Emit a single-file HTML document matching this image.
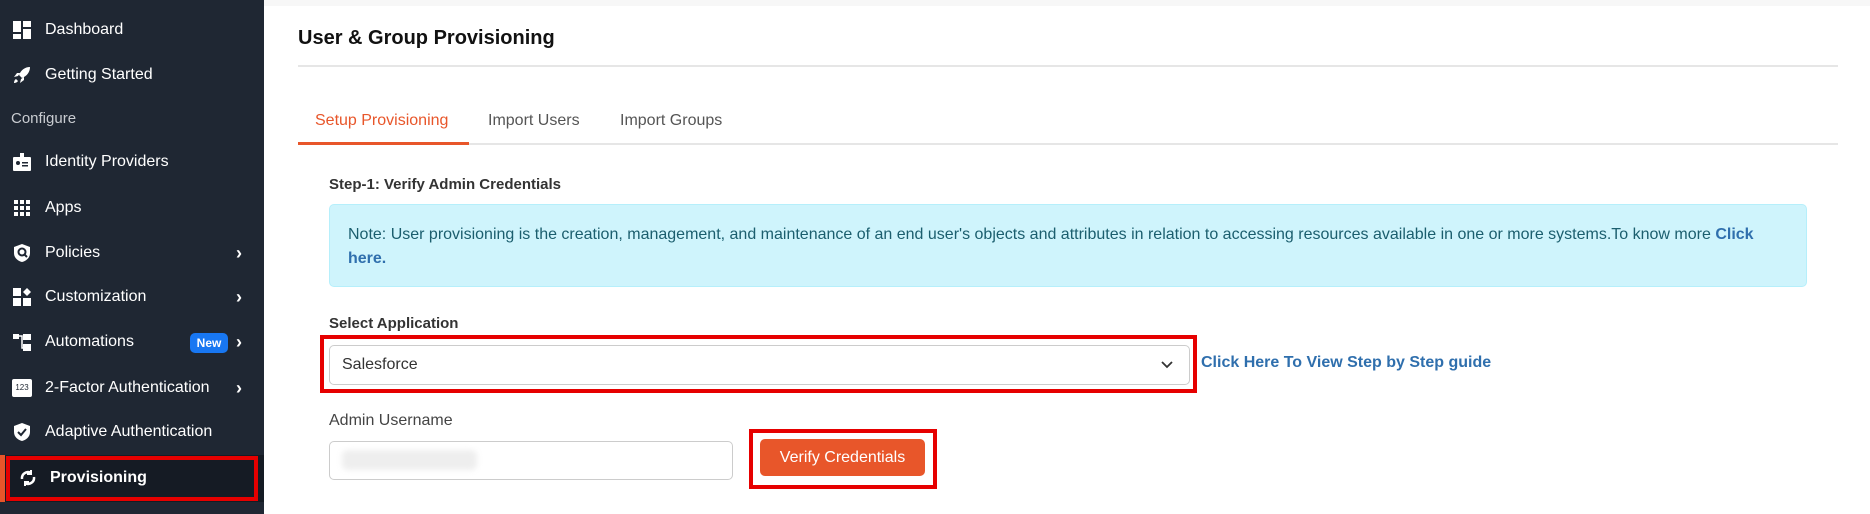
<!DOCTYPE html>
<html><head><meta charset="utf-8"><style>
*{margin:0;padding:0;box-sizing:border-box}
body{width:1870px;height:514px;overflow:hidden;background:#fff;font-family:"Liberation Sans",sans-serif;position:relative}
.sb{position:absolute;left:0;top:0;width:264px;height:514px;background:#1f2733}
.it{position:absolute;left:45px;color:#fff;font-size:16px;line-height:20px}
.ic{position:absolute;left:12px;width:20px;height:20px}
.chev{position:absolute;left:236px;color:#fff;font-size:18px;font-weight:bold;line-height:20px}
.a{position:absolute}
</style></head><body>
<div class="sb">
 <svg class="ic" style="top:20px" viewBox="0 0 20 20" fill="#fff"><rect x="1" y="1" width="8" height="11"/><rect x="11" y="1" width="8" height="6"/><rect x="11" y="9" width="8" height="10"/><rect x="1" y="14" width="8" height="5"/></svg>
 <div class="it" style="top:20px">Dashboard</div>
 <svg class="ic" style="top:65px" viewBox="0 0 20 20" fill="#fff"><path d="M18 2c-5 0-9 3-11 8l3 3c5-2 8-6 8-11zM6 11l-4 1 3-4h3zM9 14l-1 4 4-3v-3zM4 14c-2 1-2 4-2 4s3 0 4-2z"/></svg>
 <div class="it" style="top:65px">Getting Started</div>
 <div class="it" style="top:109px;left:11px;color:#c9ccd1;font-size:15px">Configure</div>
 <svg class="ic" style="top:152px" viewBox="0 0 20 20" fill="#fff"><rect x="1" y="5" width="18" height="14" rx="1"/><rect x="8" y="1" width="4" height="6" fill="#fff"/><circle cx="6" cy="11" r="2" fill="#1f2733"/><rect x="10" y="10" width="6" height="1.5" fill="#1f2733"/><rect x="10" y="13" width="6" height="1.5" fill="#1f2733"/></svg>
 <div class="it" style="top:152px">Identity Providers</div>
 <svg class="ic" style="top:198px" viewBox="0 0 20 20" fill="#fff"><rect x="2" y="2" width="4" height="4"/><rect x="8" y="2" width="4" height="4"/><rect x="14" y="2" width="4" height="4"/><rect x="2" y="8" width="4" height="4"/><rect x="8" y="8" width="4" height="4"/><rect x="14" y="8" width="4" height="4"/><rect x="2" y="14" width="4" height="4"/><rect x="8" y="14" width="4" height="4"/><rect x="14" y="14" width="4" height="4"/></svg>
 <div class="it" style="top:198px">Apps</div>
 <svg class="ic" style="top:243px" viewBox="0 0 20 20"><path d="M10 1l8 3v6c0 5-4 8-8 9-4-1-8-4-8-9V4z" fill="#fff"/><circle cx="10" cy="9" r="3.5" fill="none" stroke="#1f2733" stroke-width="2"/><path d="M12 11l3 3" stroke="#1f2733" stroke-width="2"/></svg>
 <div class="it" style="top:243px">Policies</div><div class="chev" style="top:243px">›</div>
 <svg class="ic" style="top:287px" viewBox="0 0 20 20" fill="#fff"><rect x="1" y="1" width="8" height="8"/><rect x="1" y="11" width="8" height="8"/><rect x="11" y="11" width="8" height="8"/><path d="M15 1l4 4-4 4-4-4z"/></svg>
 <div class="it" style="top:287px">Customization</div><div class="chev" style="top:287px">›</div>
 <svg class="ic" style="top:332px" viewBox="0 0 20 20" fill="#fff"><rect x="1" y="2" width="6" height="5"/><rect x="11" y="2" width="8" height="6"/><rect x="11" y="12" width="8" height="7"/><path d="M7 4h3v12h2" stroke="#fff" stroke-width="1.5" fill="none"/></svg>
 <div class="it" style="top:332px">Automations</div>
 <div class="a" style="left:190px;top:333px;width:38px;height:20px;background:#1877f2;border-radius:5px;color:#fff;font-size:12px;font-weight:bold;text-align:center;line-height:20px">New</div>
 <div class="chev" style="top:332px">›</div>
 <div class="ic" style="background:#fff;border-radius:2px;color:#1f2733;font-size:8px;text-align:center;height:18px;top:379px;line-height:18px">123</div>
 <div class="it" style="top:378px">2-Factor Authentication</div><div class="chev" style="top:378px">›</div>
 <svg class="ic" style="top:422px" viewBox="0 0 20 20"><path d="M10 1l8 3v6c0 5-4 8-8 9-4-1-8-4-8-9V4z" fill="#fff"/><path d="M6 10l3 3 5-6" stroke="#1f2733" stroke-width="2" fill="none"/></svg>
 <div class="it" style="top:422px">Adaptive Authentication</div>
 <div class="a" style="left:0;top:455px;width:264px;height:47px;background:#151b24"></div>
 <div class="a" style="left:0;top:455px;width:5px;height:47px;background:#e8562a"></div>
 <div class="a" style="left:6px;top:456px;width:252px;height:45px;border:4px solid #e60000"></div>
 <svg class="ic" style="top:468px;left:18px" viewBox="0 0 20 20" fill="none" stroke="#fff" stroke-width="2.5"><path d="M4 11a6 6 0 0 1 9-6M16 9a6 6 0 0 1-9 6"/><path d="M13 2v4h-4M7 18v-4h4" stroke-width="2"/></svg>
 <div class="it" style="top:468px;left:50px;font-weight:bold">Provisioning</div>
</div>
<div class="a" style="left:264px;top:0;width:1606px;height:6px;background:#f7f7f7"></div>
<div class="a" style="left:298px;top:27px;font-size:20px;font-weight:bold;color:#111">User &amp; Group Provisioning</div>
<div class="a" style="left:298px;top:65px;width:1540px;height:2px;background:#e6e6e6"></div>
<div class="a" style="left:315px;top:112px;font-size:16px;color:#e8562a">Setup Provisioning</div>
<div class="a" style="left:488px;top:112px;font-size:16px;color:#555">Import Users</div>
<div class="a" style="left:620px;top:112px;font-size:16px;color:#555">Import Groups</div>
<div class="a" style="left:298px;top:143px;width:1540px;height:2px;background:#e6e6e6"></div>
<div class="a" style="left:298px;top:142px;width:171px;height:3px;background:#e8562a"></div>
<div class="a" style="left:329px;top:176px;font-size:15px;font-weight:bold;color:#333">Step-1: Verify Admin Credentials</div>
<div class="a" style="left:329px;top:204px;width:1478px;height:83px;background:#cff4fc;border:1px solid #b6effb;border-radius:5px"></div>
<div class="a" style="left:348px;top:223px;width:1430px;font-size:16px;line-height:24px;color:#1b5e6e">Note: User provisioning is the creation, management, and maintenance of an end user's objects and attributes in relation to accessing resources available in one or more systems.To know more <b style="color:#2f6fad">Click here.</b></div>
<div class="a" style="left:329px;top:315px;font-size:15px;font-weight:bold;color:#333">Select Application</div>
<div class="a" style="left:320px;top:335px;width:877px;height:58px;border:4px solid #e60000"></div>
<div class="a" style="left:329px;top:345px;width:861px;height:40px;border:1px solid #ccc;border-radius:5px;background:#fff"></div>
<div class="a" style="left:342px;top:356px;font-size:16px;color:#333">Salesforce</div>
<svg class="a" style="left:1160px;top:360px" width="14" height="10" viewBox="0 0 14 10"><path d="M2 2l5 5 5-5" stroke="#333" stroke-width="1.8" fill="none"/></svg>
<div class="a" style="left:1201px;top:354px;font-size:16px;font-weight:bold;color:#2f6fad">Click Here To View Step by Step guide</div>
<div class="a" style="left:329px;top:412px;font-size:16px;color:#444">Admin Username</div>
<div class="a" style="left:329px;top:441px;width:404px;height:39px;border:1px solid #ccc;border-radius:5px;background:#fff"></div>
<div class="a" style="left:342px;top:450px;width:135px;height:20px;background:#eee;border-radius:6px;filter:blur(3px)"></div>
<div class="a" style="left:749px;top:429px;width:188px;height:60px;border:4px solid #e60000"></div>
<div class="a" style="left:760px;top:439px;width:165px;height:37px;background:#e8562a;border-radius:5px;color:#fff;font-size:16px;text-align:center;line-height:37px">Verify Credentials</div>
</body></html>
